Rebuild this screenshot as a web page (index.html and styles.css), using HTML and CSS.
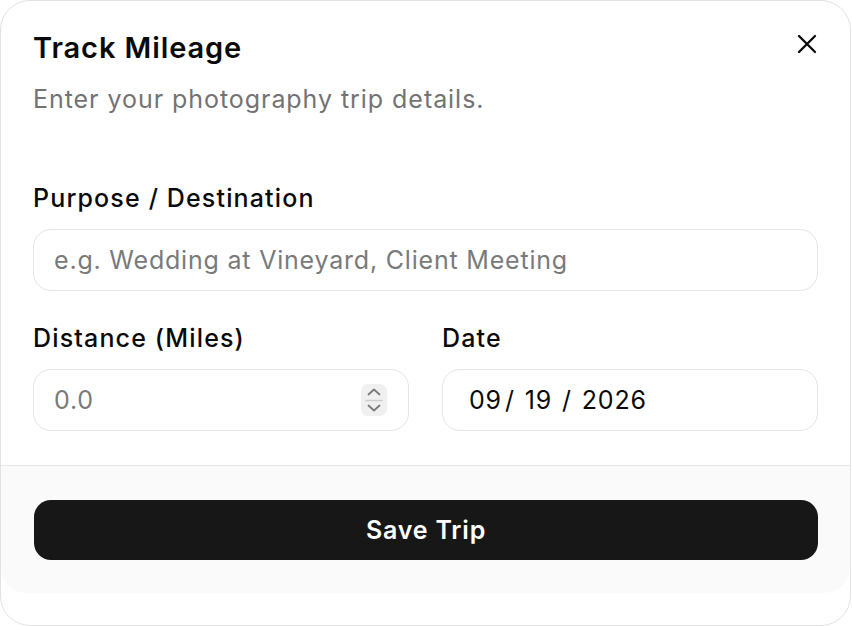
FILE: index.html
```html
<!DOCTYPE html>
<html lang="en">
<head>
<meta charset="utf-8">
<title>Track Mileage</title>
<link rel="stylesheet" href="styles.css">
</head>
<body>
<div class="dialog">
  <div class="body">
    <div class="header">
      <h2 class="title">Track Mileage</h2>
      <button class="close" aria-label="Close">
        <svg width="20" height="20" viewBox="0 0 20 20" fill="none" stroke="#0a0a0a" stroke-width="2.3" stroke-linecap="round"><path d="M2 2L18 18M18 2L2 18"/></svg>
      </button>
    </div>
    <p class="subtitle">Enter your photography trip details.</p>
    <div class="field full">
      <label class="label">Purpose / Destination</label>
      <input class="input" type="text" placeholder="e.g. Wedding at Vineyard, Client Meeting">
    </div>
    <div class="row">
      <div class="field">
        <label class="label">Distance (Miles)</label>
        <div class="input num">
          <span class="ph">0.0</span>
          <span class="spin">
            <svg width="26" height="32" viewBox="0 0 26 32" fill="none" stroke-linecap="round" stroke-linejoin="round"><path d="M7.5 10.5L13 5.5L18.5 10.5" stroke="#7a7a7a" stroke-width="1.8"/><path d="M5 16.5H21" stroke="#cdcdcd" stroke-width="1.5"/><path d="M7.5 21.5L13 26.5L18.5 21.5" stroke="#7a7a7a" stroke-width="1.8"/></svg>
          </span>
        </div>
      </div>
      <div class="field">
        <label class="label">Date</label>
        <div class="input date">09<span class="sl">/</span>19<span class="sl sp">/</span>2026</div>
      </div>
    </div>
  </div>
  <div class="footer">
    <button class="save">Save Trip</button>
  </div>
</div>
</body>
</html>
```
FILE: styles.css
```css
* { box-sizing: border-box; }
html, body { margin: 0; padding: 0; background: #fff; }
body { font-family: Inter, "Noto Sans", sans-serif; color: #0a0a0a; }
.dialog {
  width: 851px;
  height: 626px;
  border: 1px solid #e2e2e2;
  border-radius: 30px;
  background: #fff;
  padding-bottom: 31px;
  display: flex;
  flex-direction: column;
}
.body {
  padding: 29px 32px 34px 32px;
  border-bottom: 1px solid #e6e6e6;
}
.header { display: flex; justify-content: space-between; align-items: flex-start; }
.title { margin: 0; font-size: 29px; line-height: 36px; font-weight: 600; letter-spacing: 0.9px; }
.close {
  border: 0; background: none; padding: 0; margin: 4px 1px 0 0; width: 20px; height: 20px; cursor: pointer;
}
.close svg { display: block; }
.subtitle { margin: 17px 0 0; font-size: 25px; line-height: 32px; color: #737373; letter-spacing: 0.95px; }
.field { display: flex; flex-direction: column; }
.full { margin-top: 67px; }
.label { font-size: 25px; line-height: 32px; font-weight: 500; margin-bottom: 15px; letter-spacing: 1.15px; }
.input {
  height: 62px;
  border: 1.5px solid #e4e4e4;
  border-radius: 18px;
  padding: 0 20px;
  font-family: inherit;
  font-size: 25px;
  letter-spacing: 0.8px;
  color: #0a0a0a;
  background: #fff;
  outline: none;
}
.input::placeholder { color: #7a7a7a; }
.row { display: grid; grid-template-columns: 1fr 1fr; column-gap: 33px; margin-top: 31px; }
.num { display: flex; align-items: center; justify-content: space-between; padding-right: 21px; }
.ph { color: #7a7a7a; }
.spin {
  width: 26px; height: 32px; background: #f0f0f0; border-radius: 7px;
  display: flex; align-items: center; justify-content: center;
}
.spin svg { display: block; }
.date { display: flex; align-items: center; padding-left: 26px; }
.sl { margin: 0 10px 0 3px; }
.sp { margin: 0 10px 0 10px; }
.footer {
  background: #fafafa;
  border-radius: 0 0 26px 26px;
  padding: 34px 32px 33px 33px;
}
.save {
  display: block;
  width: 100%;
  height: 60px;
  border: 0;
  border-radius: 17px;
  background: #171717;
  color: #fff;
  font-family: inherit;
  font-size: 25px;
  letter-spacing: 0.8px;
  font-weight: 600;
}
```
